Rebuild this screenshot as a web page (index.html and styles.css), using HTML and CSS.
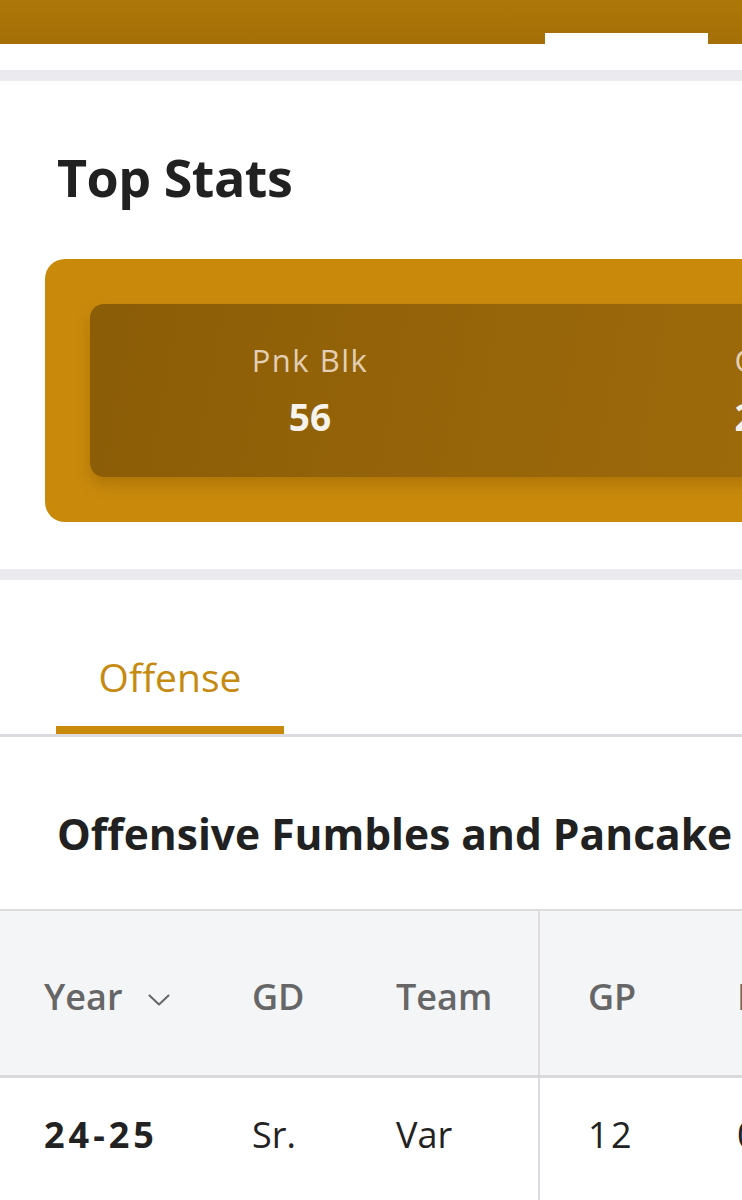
FILE: index.html
```html
<!DOCTYPE html>
<html lang="en">
<head>
<meta charset="utf-8">
<title>Top Stats</title>
<link rel="stylesheet" href="styles.css">
</head>
<body>
<header class="topbar">
  <div class="topbar-tab"></div>
</header>
<div class="gap"></div>
<div class="band"></div>

<section class="top-stats">
  <h1 class="section-title">Top Stats</h1>
  <div class="stats-card">
    <div class="stats-inner">
      <div class="stat">
        <span class="stat-label">Pnk Blk</span>
        <span class="stat-value">56</span>
      </div>
      <div class="stat stat-second">
        <span class="stat-label">C</span>
        <span class="stat-value">2</span>
      </div>
    </div>
  </div>
</section>

<div class="band"></div>

<section class="stats-tables">
  <nav class="tabs">
    <div class="tab tab-active">Offense</div>
  </nav>
  <h2 class="table-title">Offensive Fumbles and Pancake</h2>
  <div class="table-wrap">
    <table class="stats-table">
      <colgroup>
        <col class="c-year">
        <col class="c-gd">
        <col class="c-team">
        <col class="c-gp">
        <col class="c-next">
      </colgroup>
      <thead>
        <tr>
          <th class="first">Year <svg class="chev" width="22" height="12" viewBox="0 0 22 12"><path d="M1.5 1.5 L11 10.5 L20.5 1.5" fill="none" stroke="#666" stroke-width="2" stroke-linecap="round" stroke-linejoin="round"/></svg></th>
          <th>GD</th>
          <th class="divider">Team</th>
          <th class="gp">GP</th>
          <th>F</th>
        </tr>
      </thead>
      <tbody>
        <tr>
          <td class="first bold num">24-25</td>
          <td>Sr.</td>
          <td class="divider">Var</td>
          <td class="gp num">12</td>
          <td class="num">0</td>
        </tr>
      </tbody>
    </table>
  </div>
</section>
</body>
</html>
```
FILE: styles.css
```css
html, body {
  margin: 0;
  padding: 0;
  background: #ffffff;
  overflow-x: hidden;
}

body {
  font-family: "Open Sans", "Noto Sans", sans-serif;
  color: #222222;
  width: 742px;
}

.topbar {
  height: 44px;
  background: linear-gradient(180deg, #ae7708 0%, #a46f07 100%);
  display: flex;
  justify-content: flex-end;
  align-items: flex-end;
  padding-right: 34px;
}

.topbar-tab {
  width: 163px;
  height: 11px;
  background: #ffffff;
}

.gap {
  height: 26px;
}

.band {
  height: 11px;
  background: #ebebef;
}

.top-stats {
  padding: 70px 0 47px 0;
}

.section-title {
  margin: 0 0 56px 57px;
  font-size: 52px;
  line-height: 52px;
  font-weight: 700;
  color: #212121;
  letter-spacing: -0.5px;
}

.stats-card {
  margin-left: 45px;
  width: 900px;
  box-sizing: border-box;
  height: 263px;
  padding: 45px;
  background: #c98a0c;
  border-radius: 20px;
}

.stats-inner {
  height: 173px;
  border-radius: 14px;
  background: linear-gradient(100deg, #8b5d06 0%, #97650a 50%, #a06c0a 100%);
  box-shadow: 0 8px 14px rgba(130, 80, 0, 0.35);
  display: flex;
  align-items: center;
}

.stat {
  flex: 0 0 440px;
  display: flex;
  flex-direction: column;
  align-items: center;
  gap: 17px;
}

.stat-second {
  flex-basis: 430px;
}

.stat-label {
  font-size: 31px;
  line-height: 36px;
  letter-spacing: 1.5px;
  color: #e3cfb3;
  font-weight: 400;
}

.stat-value {
  font-size: 37px;
  line-height: 44px;
  font-weight: 700;
  color: #f6f2ec;
}

.stats-tables {
  padding-top: 75px;
}

.tabs {
  display: flex;
  border-bottom: 3px solid #dcdce0;
}

.tab {
  margin-left: 56px;
  width: 228px;
  text-align: center;
  font-size: 39px;
  line-height: 43px;
  font-weight: 500;
  padding-bottom: 28px;
  border-bottom: 8px solid #c98a0c;
}

.tab-active {
  color: #c68a10;
}

.table-title {
  margin: 74px 0 52px 57px;
  font-size: 42.5px;
  line-height: 46px;
  font-weight: 700;
  color: #212121;
  white-space: nowrap;
}

.table-wrap {
  overflow: hidden;
  width: 742px;
}

.stats-table {
  border-collapse: collapse;
  table-layout: fixed;
  width: 1000px;
  border-top: 2px solid #dcdcdf;
}

.c-year { width: 252px; }
.c-gd { width: 144px; }
.c-team { width: 143px; }
.c-gp { width: 198px; }
.c-next { width: 263px; }

.stats-table th,
.stats-table td {
  text-align: left;
  padding: 0;
  font-size: 36px;
  line-height: 43px;
  white-space: nowrap;
}

.stats-table thead tr {
  background: #f4f5f7;
  border-bottom: 3px solid #d9d9dc;
}

.stats-table th {
  font-weight: 600;
  color: #666666;
  padding-top: 64px;
  padding-bottom: 57px;
}

.stats-table td {
  color: #222222;
  font-weight: 400;
  padding-top: 35px;
  padding-bottom: 64px;
}

.stats-table .first {
  padding-left: 44px;
}

.stats-table .bold {
  font-weight: 700;
}

.stats-table .num {
  letter-spacing: 2.5px;
}

.stats-table .bold.num {
  letter-spacing: 4px;
}

.stats-table .divider {
  border-right: 2px solid #dcdcdf;
}

.stats-table .gp {
  padding-left: 48px;
}

.chev {
  margin-left: 16px;
  vertical-align: middle;
}
```
